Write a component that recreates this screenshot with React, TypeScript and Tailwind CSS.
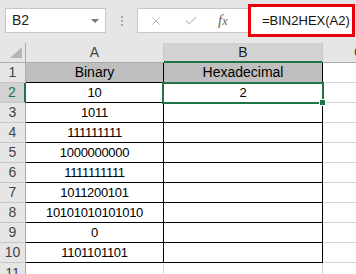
import { Fragment } from "react";
import { X, Check } from "lucide-react";

const rows = [
  "10",
  "1011",
  "111111111",
  "1000000000",
  "1111111111",
  "1011200101",
  "10101010101010",
  "0",
  "1101101101",
];

export default function App() {
  return (
    <div className="w-[356px] h-[274px] overflow-hidden bg-white font-['Liberation_Sans',Arial,sans-serif] text-[#000]">
      {/* Formula bar */}
      <div className="h-[43px] bg-[#e6e6e6] flex items-start">
        <div className="ml-[5px] mt-[8px] w-[101px] h-[25px] bg-white border border-[#c6c6c6] flex items-center justify-between pl-[6px] pr-[6px]">
          <span className="text-[14px] text-[#222]">B2</span>
          <div className="w-0 h-0 border-l-[4px] border-r-[4px] border-t-[4px] border-l-transparent border-r-transparent border-t-[#777]" />
        </div>
        <div className="w-[31px] h-[43px] flex flex-col items-center justify-center gap-[2px] pb-[2px]">
          <div className="w-[2px] h-[2px] bg-[#a8a8a8]" />
          <div className="w-[2px] h-[2px] bg-[#a8a8a8]" />
          <div className="w-[2px] h-[2px] bg-[#a8a8a8]" />
        </div>
        <div className="mt-[8px] w-[111px] h-[25px] bg-white border border-[#c6c6c6] border-r-0 flex items-center pl-[11px]">
          <X className="w-[14px] h-[14px] text-[#b8b8b8]" strokeWidth={1.6} />
          <Check className="ml-[21px] w-[14px] h-[14px] text-[#c4c4c4]" strokeWidth={2.2} />
          <span className="ml-[20px] font-['Liberation_Serif',serif] italic text-[15px] text-[#666] leading-none">
            f<span className="text-[12px]">x</span>
          </span>
        </div>
        <div className="mt-[4px] w-[107px] h-[33px] bg-white border-[3px] border-[#e8000b] flex items-center pl-[11px]">
          <span className="text-[13px] text-[#111] whitespace-nowrap">=BIN2HEX(A2)</span>
        </div>
      </div>

      {/* Sheet */}
      <div className="grid grid-cols-[26px_138px_159px_72px] auto-rows-[20px] text-[14px]">
        {/* column headers */}
        <div className="bg-[#e6e6e6] border-r border-b border-[#ababab] relative">
          <svg className="absolute left-[10px] top-[4px]" width="12" height="11" viewBox="0 0 12 11">
            <polygon points="12,0 12,11 0,11" fill="#b5b5b5" />
          </svg>
        </div>
        <div className="bg-[#e6e6e6] border-r border-b border-[#c6c6c6] border-b-[#ababab] flex items-center justify-center text-[#444]">
          A
        </div>
        <div className="bg-[#d2d2d2] border-r border-[#c6c6c6] border-b-2 border-b-[#217346] flex items-center justify-center text-[#222]">
          B
        </div>
        <div className="bg-[#e6e6e6] border-b border-[#ababab] flex items-center justify-center text-[#444]">
          C
        </div>

        {/* row 1 */}
        <div className="bg-[#e6e6e6] border-r border-b border-[#c6c6c6] border-r-[#ababab] flex items-center justify-center text-[#444]">
          1
        </div>
        <div className="bg-[#bfbfbf] border-r border-b border-black flex items-center justify-center">
          Binary
        </div>
        <div className="bg-[#bfbfbf] border-r border-b border-black flex items-center justify-center">
          Hexadecimal
        </div>
        <div className="border-b border-[#d4d4d4]" />

        {/* row 2 */}
        <div className="bg-[#d2d2d2] border-b border-[#c6c6c6] border-r-2 border-r-[#217346] flex items-center justify-center text-[#217346]">
          2
        </div>
        <div className="border-r border-b border-black flex items-center justify-center text-[13px] tracking-[-0.3px]">
          {rows[0]}
        </div>
        <div className="relative border-r border-b border-black flex items-center justify-center text-[13px]">
          2
          <div className="absolute -left-[2px] -top-[1px] w-[162px] h-[22px] border-2 border-[#217346] z-10" />
          <div className="absolute left-[155px] top-[16px] w-[7px] h-[7px] bg-[#217346] border border-white z-20" />
        </div>
        <div className="border-b border-[#d4d4d4]" />

        {rows.slice(1).map((v, i) => (
          <Fragment key={i}>
            <div className="bg-[#e6e6e6] border-r border-b border-[#c6c6c6] border-r-[#ababab] flex items-center justify-center text-[#444]">
              {i + 3}
            </div>
            <div className="border-r border-b border-black flex items-center justify-center text-[13px] tracking-[-0.3px]">
              {v}
            </div>
            <div className="border-r border-b border-black" />
            <div className="border-b border-[#d4d4d4]" />
          </Fragment>
        ))}

        {/* row 11 */}
        <div className="bg-[#e6e6e6] border-r border-[#ababab] flex items-center justify-center text-[#444]">
          11
        </div>
        <div className="border-r border-[#d4d4d4]" />
        <div className="border-r border-[#d4d4d4]" />
        <div />
      </div>
    </div>
  );
}
